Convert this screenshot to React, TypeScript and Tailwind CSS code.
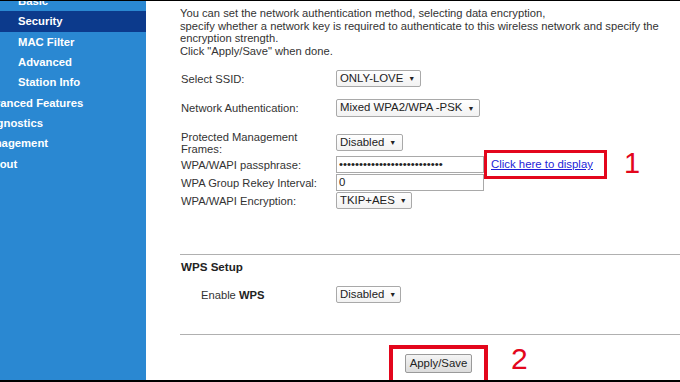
import React from "react";

const menu = [
  { label: "Basic", sub: true },
  { label: "Security", sub: true, active: true },
  { label: "MAC Filter", sub: true },
  { label: "Advanced", sub: true },
  { label: "Station Info", sub: true },
  { label: "Advanced Features", sub: false },
  { label: "Diagnostics", sub: false },
  { label: "Management", sub: false },
  { label: "Logout", sub: false },
];

function Sel({ value, className }: { value: string; className: string }) {
  return (
    <div
      className={`h-[17px] border border-[#a9a9a9] rounded-[2px] bg-gradient-to-b from-white to-[#f2f2f2] flex items-center pl-[3px] gap-[5px] text-[11.4px] text-[#222] ${className}`}
    >
      <span>{value}</span>
      <span className="text-[7px] leading-none">▼</span>
    </div>
  );
}

function Field({ value }: { value: string }) {
  return (
    <div className="h-[17px] w-[148px] border border-[#a9a9a9] bg-white flex items-center px-[2px] text-[11.4px] text-[#222]">
      {value}
    </div>
  );
}

function Row({ label, children, className = "" }: { label: React.ReactNode; children: React.ReactNode; className?: string }) {
  return (
    <div className={`flex items-center ${className}`}>
      <div className="w-[155px] shrink-0 leading-[12px]">{label}</div>
      {children}
    </div>
  );
}

export default function App() {
  return (
    <div className="w-[680px] h-[382px] overflow-hidden flex flex-col bg-black font-['Liberation_Sans',Arial,sans-serif]">
      <div className="flex flex-1 mt-[1px] mb-[2px] overflow-hidden bg-white">
        <aside className="w-[146px] shrink-0 bg-[#2a88d2] overflow-hidden">
          <ul className="mt-[-10px] text-white font-bold text-[11.3px]">
            {menu.map((m) => (
              <li
                key={m.label}
                className={`h-[20.4px] flex items-center whitespace-nowrap ${m.sub ? "pl-[18px]" : "ml-[-21px]"} ${m.active ? "bg-[#0c3a8c]" : ""}`}
              >
                {m.label}
              </li>
            ))}
          </ul>
        </aside>

        <main className="flex-1 pt-[6px] text-[#333] text-[11.2px]">
          <p className="pl-[34px] pr-[10px] leading-[12.5px]">
            You can set the network authentication method, selecting data encryption,
            <br />
            specify whether a network key is required to authenticate to this wireless network and specify the
            <br />
            encryption strength.
            <br />
            Click "Apply/Save" when done.
          </p>

          <div className="pl-[35px]">
            <Row label="Select SSID:" className="mt-[13px]">
              <Sel value="ONLY-LOVE" className="w-[85px]" />
            </Row>
            <Row label="Network Authentication:" className="mt-[12px]">
              <Sel value="Mixed WPA2/WPA -PSK" className="w-[144px] h-[18px]" />
            </Row>
            <Row
              label={
                <>
                  Protected Management
                  <br />
                  Frames:
                </>
              }
              className="mt-[13px] h-[25px]"
            >
              <Sel value="Disabled" className="w-[67px]" />
            </Row>
            <Row label="WPA/WAPI passphrase:" className="mt-[1px] h-[17px]">
              <Field value={"•".repeat(26)} />
              <div className="my-[-6px] border-[3px] border-[#e3061c] w-[123px] h-[29px] flex items-center pl-[4px]">
                <a className="text-[#1d1dd8] underline text-[11.4px]">Click here to display</a>
              </div>
              <span className="ml-[17px] my-[-6px] mt-[-8px] text-[29px] text-[#e3061c] leading-[29px] h-[29px]">1</span>
            </Row>
            <Row label="WPA Group Rekey Interval:" className="mt-[1px]">
              <Field value="0" />
            </Row>
            <Row label="WPA/WAPI Encryption:" className="mt-[1px]">
              <Sel value="TKIP+AES" className="w-[76px]" />
            </Row>
          </div>

          <div className="ml-[34px] mt-[45px] border-t border-[#b0b0b0]" />
          <div className="pl-[35px] mt-[3px] font-bold text-[11.6px] text-[#222]">WPS Setup</div>
          <Row
            label={
              <span className="pl-[20px]">
                Enable <b className="text-[#222]">WPS</b>
              </span>
            }
            className="pl-[35px] mt-[11px]"
          >
            <Sel value="Disabled" className="w-[65px]" />
          </Row>

          <div className="ml-[34px] mt-[31px] border-t border-[#b0b0b0]" />

          <div className="flex items-start pl-[243px] mt-[10px]">
            <div className="w-[99px] h-[40px] border-[4px] border-[#e3061c] flex justify-center pt-[5px]">
              <button className="h-[19px] px-[4px] border border-[#9a9a9a] rounded-[2px] bg-gradient-to-b from-[#f4f4f4] to-[#dcdcdc] text-[11.4px] text-[#222] leading-none">
                Apply/Save
              </button>
            </div>
            <span className="ml-[23px] mt-[-1px] text-[30px] text-[#e3061c] leading-none">2</span>
          </div>
        </main>
      </div>
    </div>
  );
}
